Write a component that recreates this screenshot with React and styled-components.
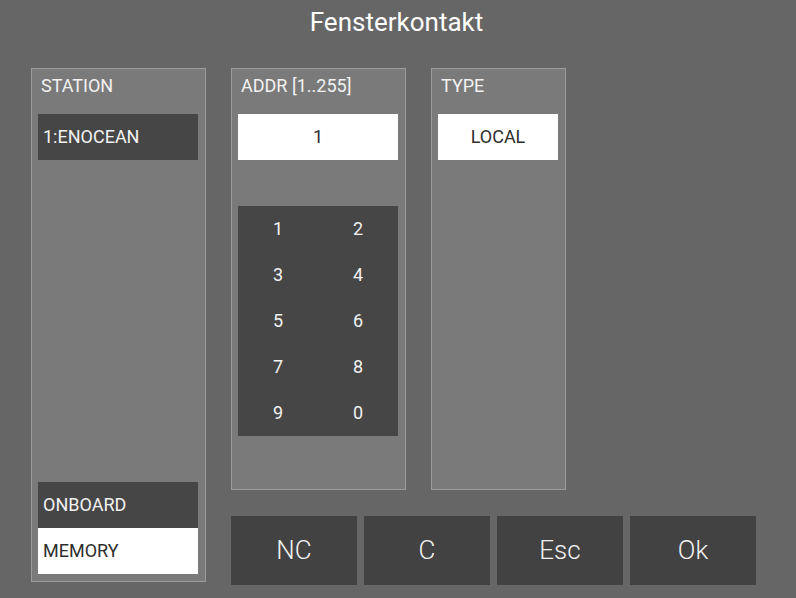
import React, { useState } from 'react'
import styled, { createGlobalStyle } from 'styled-components'

const GlobalStyle = createGlobalStyle`
  html, body {
    margin: 0;
    padding: 0;
    background: #666666;
  }
  body {
    font-family: Roboto, "Liberation Sans", sans-serif;
    color: #f2f2f2;
  }
`

const stations = ['1:ENOCEAN']
const sources = ['ONBOARD', 'MEMORY']
const keys = ['1', '2', '3', '4', '5', '6', '7', '8', '9', '0']
const actions = ['NC', 'C', 'Esc', 'Ok']

function App() {
  const [addr, setAddr] = useState('1')
  const [source, setSource] = useState('MEMORY')

  return (
    <Screen>
      <GlobalStyle />
      <Title>Fensterkontakt</Title>
      <Body>
        <Panel width={175} height={514}>
          <Label>STATION</Label>
          {stations.map((s) => (
            <Item key={s}>{s}</Item>
          ))}
          <Spacer />
          {sources.map((s) => (
            <Item key={s} active={s === source} onClick={() => setSource(s)}>
              {s}
            </Item>
          ))}
        </Panel>
        <RightColumn>
          <PanelRow>
            <Panel width={175} height={422}>
              <Label>ADDR [1..255]</Label>
              <Field>{addr}</Field>
              <Keypad>
                {keys.map((k) => (
                  <Key key={k} onClick={() => setAddr(k)}>
                    {k}
                  </Key>
                ))}
              </Keypad>
            </Panel>
            <Panel width={135} height={422}>
              <Label>TYPE</Label>
              <Field>LOCAL</Field>
            </Panel>
          </PanelRow>
          <ButtonRow>
            {actions.map((a) => (
              <ActionButton key={a}>{a}</ActionButton>
            ))}
          </ButtonRow>
        </RightColumn>
      </Body>
    </Screen>
  )
}

const Screen = styled.div`
  width: 796px;
  height: 598px;
  background: #666666;
  overflow: hidden;
`

const Title = styled.div`
  height: 44px;
  line-height: 44px;
  text-align: center;
  font-size: 26px;
  color: #ffffff;
  padding-right: 3px;
`

const Body = styled.div`
  display: flex;
  gap: 25px;
  margin-top: 24px;
  padding-left: 31px;
`

const RightColumn = styled.div`
  display: flex;
  flex-direction: column;
  gap: 26px;
`

const PanelRow = styled.div`
  display: flex;
  gap: 25px;
`

const Panel = styled.div`
  box-sizing: border-box;
  width: ${(p) => p.width}px;
  height: ${(p) => p.height}px;
  background: #7a7a7a;
  border: 1px solid #9c9c9c;
  padding: 0 7px 7px 6px;
  display: flex;
  flex-direction: column;
`

const Label = styled.div`
  height: 34px;
  line-height: 34px;
  padding-left: 3px;
  margin-bottom: 11px;
  font-size: 18px;
`

const Item = styled.div`
  height: 46px;
  line-height: 46px;
  padding-left: 5px;
  font-size: 18px;
  background: ${(p) => (p.active ? '#ffffff' : '#464646')};
  color: ${(p) => (p.active ? '#2e2e2e' : '#f2f2f2')};
  cursor: pointer;
`

const Spacer = styled.div`
  flex: 1;
`

const Field = styled.div`
  height: 46px;
  line-height: 46px;
  background: #ffffff;
  color: #2e2e2e;
  text-align: center;
  font-size: 18px;
`

const Keypad = styled.div`
  margin-top: 46px;
  display: grid;
  grid-template-columns: repeat(2, 80px);
  grid-auto-rows: 46px;
  background: #464646;
`

const Key = styled.div`
  line-height: 46px;
  text-align: center;
  font-size: 18px;
  cursor: pointer;
`

const ButtonRow = styled.div`
  display: flex;
  gap: 7px;
`

const ActionButton = styled.div`
  width: 126px;
  height: 69px;
  line-height: 69px;
  text-align: center;
  background: #424242;
  font-size: 26px;
  font-weight: 300;
  cursor: pointer;
`

export default App
